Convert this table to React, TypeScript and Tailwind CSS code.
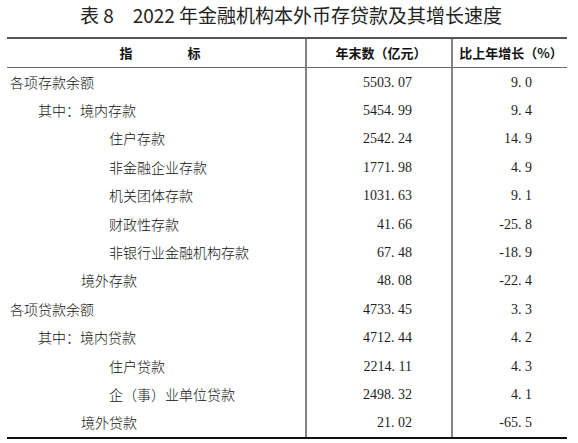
import React from "react";

type Row = { label: string; indent: number; val: string; pct: string };

const rows: Row[] = [
  { label: "各项存款余额", indent: 0, val: "5503.07", pct: "9.0" },
  { label: "其中：境内存款", indent: 1, val: "5454.99", pct: "9.4" },
  { label: "住户存款", indent: 3, val: "2542.24", pct: "14.9" },
  { label: "非金融企业存款", indent: 3, val: "1771.98", pct: "4.9" },
  { label: "机关团体存款", indent: 3, val: "1031.63", pct: "9.1" },
  { label: "财政性存款", indent: 3, val: "41.66", pct: "-25.8" },
  { label: "非银行业金融机构存款", indent: 3, val: "67.48", pct: "-18.9" },
  { label: "境外存款", indent: 2, val: "48.08", pct: "-22.4" },
  { label: "各项贷款余额", indent: 0, val: "4733.45", pct: "3.3" },
  { label: "其中：境内贷款", indent: 1, val: "4712.44", pct: "4.2" },
  { label: "住户贷款", indent: 3, val: "2214.11", pct: "4.3" },
  { label: "企（事）业单位贷款", indent: 3, val: "2498.32", pct: "4.1" },
  { label: "境外贷款", indent: 2, val: "21.02", pct: "-65.5" },
];

const indentCls = ["pl-[3px]", "pl-[31px]", "pl-[74px]", "pl-[102px]"];

function Num({ v }: { v: string }) {
  const [a, b] = v.split(".");
  return (
    <span className="whitespace-nowrap">
      {a}
      <span className="inline-block w-[7px]">.</span>
      {b}
    </span>
  );
}

export default function App() {
  return (
    <div className="w-[578px] h-[443px] bg-white text-[#1e1e1e]">
      <div
        className="h-[37px] flex items-center justify-center pl-[4px] pb-[6px] text-[19px] text-[#222]"
        style={{ fontFamily: '"Noto Sans CJK SC", "Noto Sans", sans-serif' }}
      >
        <span>表 8</span>
        <span className="w-[19px]" />
        <span>2022 年金融机构本外币存贷款及其增长速度</span>
      </div>
      <div className="ml-[7px] w-[560px] border-t-2 border-[#555] border-b-[1.5px] border-b-[#6a6a6a]">
        <div
          className="grid grid-cols-[298px_146px_116px] h-[28px] text-[13px] font-bold text-[#111]"
          style={{ fontFamily: '"Noto Sans CJK SC", sans-serif' }}
        >
          <div className="flex items-center justify-center gap-[55px] pl-[8px]">
            <span>指</span>
            <span>标</span>
          </div>
          <div className="flex items-center justify-center border-l-2 border-[#858585] pl-[4px]">
            年末数（亿元）
          </div>
          <div className="flex items-center justify-center border-l-2 border-[#858585] pl-[2px]">
            比上年增长（%）
          </div>
        </div>
      </div>
      <div className="ml-[7px] w-[560px] border-b-2 border-[#111]">
        {rows.map((r, i) => (
          <div key={i} className="grid grid-cols-[298px_146px_116px] h-[28.4px]">
            <div
              className={`flex items-center text-[14px] font-light text-[#111] ${indentCls[r.indent]}`}
              style={{ fontFamily: '"Noto Sans CJK SC", sans-serif' }}
            >
              {r.label}
            </div>
            <div
              className="flex items-center justify-end pr-[39px] border-l-2 border-[#858585] text-[14px]"
              style={{ fontFamily: '"Liberation Serif", serif' }}
            >
              <Num v={r.val} />
            </div>
            <div
              className="flex items-center justify-end pr-[35px] border-l-2 border-[#858585] text-[14px]"
              style={{ fontFamily: '"Liberation Serif", serif' }}
            >
              <Num v={r.pct} />
            </div>
          </div>
        ))}
      </div>
    </div>
  );
}
